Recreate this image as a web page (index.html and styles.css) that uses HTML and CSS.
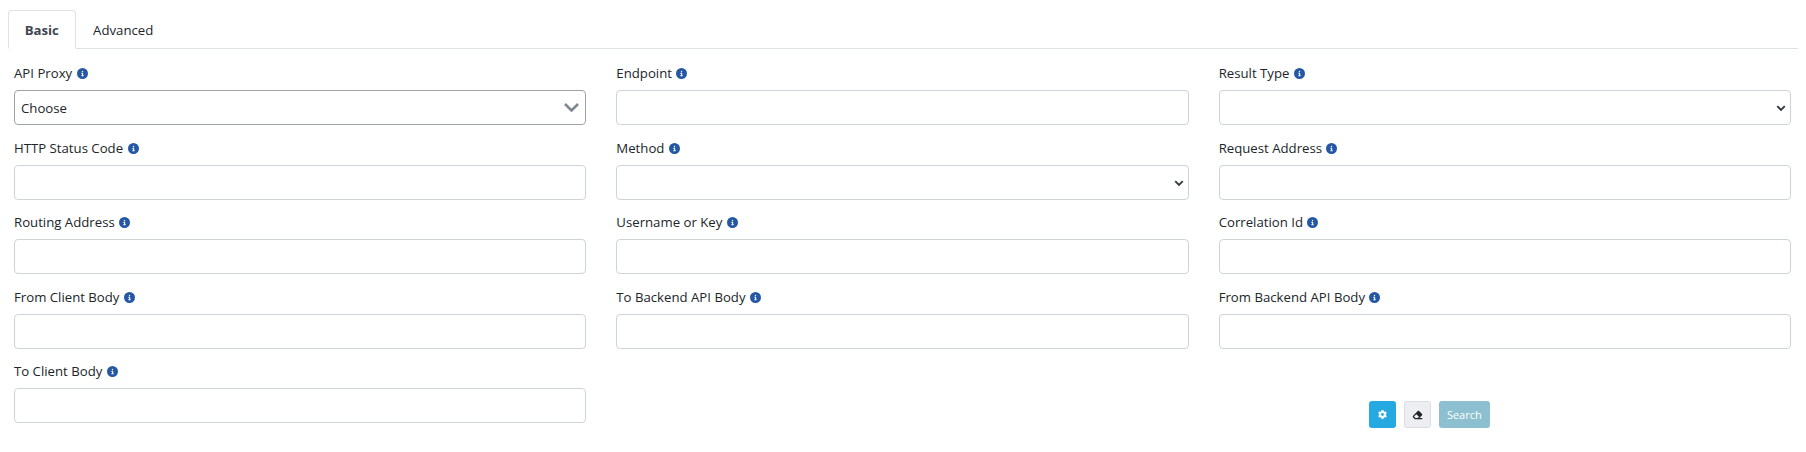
FILE: index.html
```html
<!DOCTYPE html>
<html lang="en">
<head>
  <meta charset="UTF-8">
  <meta name="viewport" content="width=device-width, initial-scale=1.0">
  <title>Search</title>
  <link rel="stylesheet" href="styles.css">
</head>
<body>
  <svg class="sprites" aria-hidden="true">
    <symbol id="i-info" viewBox="0 0 512 512"><path d="M256 512A256 256 0 1 0 256 0a256 256 0 1 0 0 512zM216 336h24V272H216c-13.3 0-24-10.7-24-24s10.7-24 24-24h48c13.3 0 24 10.7 24 24v88h8c13.3 0 24 10.7 24 24s-10.7 24-24 24H216c-13.3 0-24-10.7-24-24s10.7-24 24-24zm40-208a32 32 0 1 1 0 64 32 32 0 1 1 0-64z"/></symbol>
    <symbol id="i-gear" viewBox="0 0 512 512"><path d="M495.9 166.6c3.2 8.7 .5 18.4-6.4 24.6l-43.3 39.4c1.1 8.3 1.7 16.8 1.7 25.4s-.6 17.1-1.7 25.4l43.3 39.4c6.9 6.2 9.6 15.9 6.4 24.6c-4.4 11.9-9.7 23.3-15.8 34.3l-4.7 8.1c-6.6 11-14 21.4-22.1 31.2c-5.9 7.2-15.7 9.6-24.5 6.8l-55.7-17.7c-13.4 10.3-28.2 18.9-44 25.4l-12.5 57.1c-2 9.1-9 16.3-18.2 17.8c-13.8 2.3-28 3.5-42.5 3.5s-28.7-1.2-42.5-3.5c-9.2-1.5-16.2-8.7-18.2-17.8l-12.5-57.1c-15.8-6.5-30.6-15.1-44-25.4L83.1 425.9c-8.8 2.8-18.6 .3-24.5-6.8c-8.1-9.8-15.5-20.2-22.1-31.2l-4.7-8.1c-6.1-11-11.4-22.4-15.8-34.3c-3.2-8.7-.5-18.4 6.4-24.6l43.3-39.4C64.6 273.1 64 264.6 64 256s.6-17.1 1.7-25.4L22.4 191.2c-6.9-6.2-9.6-15.9-6.4-24.6c4.4-11.9 9.7-23.3 15.8-34.3l4.7-8.1c6.6-11 14-21.4 22.1-31.2c5.9-7.2 15.7-9.6 24.5-6.8l55.7 17.7c13.4-10.3 28.2-18.9 44-25.4l12.5-57.1c2-9.1 9-16.3 18.2-17.8C227.3 1.2 241.5 0 256 0s28.7 1.2 42.5 3.5c9.2 1.5 16.2 8.7 18.2 17.8l12.5 57.1c15.8 6.5 30.6 15.1 44 25.4l55.7-17.7c8.8-2.8 18.6-.3 24.5 6.8c8.1 9.8 15.5 20.2 22.1 31.2l4.7 8.1c6.1 11 11.4 22.4 15.8 34.3zM256 336a80 80 0 1 0 0-160 80 80 0 1 0 0 160z"/></symbol>
    <symbol id="i-eraser" viewBox="0 0 576 512"><path d="M290.7 57.4L57.4 290.7c-25 25-25 65.5 0 90.5l80 80c12 12 28.3 18.7 45.3 18.7H288h9.4H512c17.7 0 32-14.3 32-32s-14.3-32-32-32H387.9L518.6 285.3c25-25 25-65.5 0-90.5L381.3 57.4c-25-25-65.5-25-90.5 0zM297.4 416H288l-105.4 0-80-80L227.3 211.3 364.7 348.7 297.4 416z"/></symbol>
  </svg>

  <div class="tabs">
    <a class="tab active">Basic</a>
    <a class="tab">Advanced</a>
  </div>

  <form class="filter-grid">
    <div class="field">
      <label>API Proxy <svg class="info"><use href="#i-info"/></svg></label>
      <div class="choose">
        <span>Choose</span>
        <svg class="choose-arrow" viewBox="0 0 15 9"><path d="M1 1l6.5 6.5L14 1"/></svg>
      </div>
    </div>
    <div class="field">
      <label>Endpoint <svg class="info"><use href="#i-info"/></svg></label>
      <input type="text">
    </div>
    <div class="field">
      <label>Result Type <svg class="info"><use href="#i-info"/></svg></label>
      <div class="select-wrap">
        <select><option></option></select>
        <svg class="select-arrow" viewBox="0 0 16 16"><path d="m2 5 6 6 6-6"/></svg>
      </div>
    </div>

    <div class="field">
      <label>HTTP Status Code <svg class="info"><use href="#i-info"/></svg></label>
      <input type="text">
    </div>
    <div class="field">
      <label>Method <svg class="info"><use href="#i-info"/></svg></label>
      <div class="select-wrap">
        <select><option></option></select>
        <svg class="select-arrow" viewBox="0 0 16 16"><path d="m2 5 6 6 6-6"/></svg>
      </div>
    </div>
    <div class="field">
      <label>Request Address <svg class="info"><use href="#i-info"/></svg></label>
      <input type="text">
    </div>

    <div class="field">
      <label>Routing Address <svg class="info"><use href="#i-info"/></svg></label>
      <input type="text">
    </div>
    <div class="field">
      <label>Username or Key <svg class="info"><use href="#i-info"/></svg></label>
      <input type="text">
    </div>
    <div class="field">
      <label>Correlation Id <svg class="info"><use href="#i-info"/></svg></label>
      <input type="text">
    </div>

    <div class="field">
      <label>From Client Body <svg class="info"><use href="#i-info"/></svg></label>
      <input type="text">
    </div>
    <div class="field">
      <label>To Backend API Body <svg class="info"><use href="#i-info"/></svg></label>
      <input type="text">
    </div>
    <div class="field">
      <label>From Backend API Body <svg class="info"><use href="#i-info"/></svg></label>
      <input type="text">
    </div>

    <div class="field">
      <label>To Client Body <svg class="info"><use href="#i-info"/></svg></label>
      <input type="text">
    </div>
    <div class="actions">
      <button type="button" class="btn btn-settings"><svg><use href="#i-gear"/></svg></button>
      <button type="button" class="btn btn-clear"><svg><use href="#i-eraser"/></svg></button>
      <button type="button" class="btn btn-search">Search</button>
    </div>
  </form>
</body>
</html>
```

FILE: styles.css
```css
body { margin: 0; background: #fff; color: #212529; font-family: "Open Sans", "Noto Sans", sans-serif; font-size: 13.2px; }
.sprites { display: none; }

.tabs { display: flex; margin: 10px 8px 0; border-bottom: 1px solid #dee2e6; height: 38px; }
.tab { display: flex; align-items: center; padding: 0 16.5px; margin-bottom: -1px; border: 1px solid transparent; border-radius: 4px 4px 0 0; }
.tab.active { padding: 0 15.7px; background: #fff; border-color: #dee2e6 #dee2e6 #fff; font-weight: 700; color: #3f4650; }

.filter-grid { display: grid; grid-template-columns: repeat(3, 1fr); column-gap: 30px; padding: 0 15px 0 14px; margin-top: 15px; }
.field { display: flex; flex-direction: column; height: 74.5px; }
.field label { display: block; height: 26px; line-height: 18px; }
.info { width: 11px; height: 11px; margin-left: 1px; vertical-align: -1px; fill: #2458a5; }

.field input, .field select, .choose { box-sizing: border-box; width: 100%; height: 35px; border: 1px solid #ced4da; border-radius: 4px; background: #fff; font: inherit; }
.choose { display: flex; align-items: center; justify-content: space-between; padding: 0 6px; border-color: #a0a3a7; }
.choose-arrow { width: 15px; height: 9px; fill: none; stroke: #7f8790; stroke-width: 2.6; }

.select-wrap { position: relative; }
.select-wrap select { appearance: none; display: block; }
.select-arrow { position: absolute; top: 13px; right: 5px; width: 10px; height: 10px; fill: none; stroke: #343a40; stroke-width: 3; pointer-events: none; }

.actions { grid-column: 3; display: flex; justify-content: center; align-items: flex-end; gap: 8px; padding: 0 151px 8.5px 0; }
.btn { box-sizing: border-box; display: flex; align-items: center; justify-content: center; height: 27px; padding: 0; border: 1px solid transparent; border-radius: 3px; font: inherit; font-size: 11px; }
.btn svg { width: 9px; height: 9px; }
.btn-settings { width: 27px; background: #25a9e0; }
.btn-settings svg { fill: #fff; }
.btn-clear { width: 27px; background: #eceef1; border-color: #d9dce1; }
.btn-clear svg { width: 11px; height: 10px; fill: #212529; }
.btn-search { width: 51px; background: #8cbfcf; color: #fff; }
```
